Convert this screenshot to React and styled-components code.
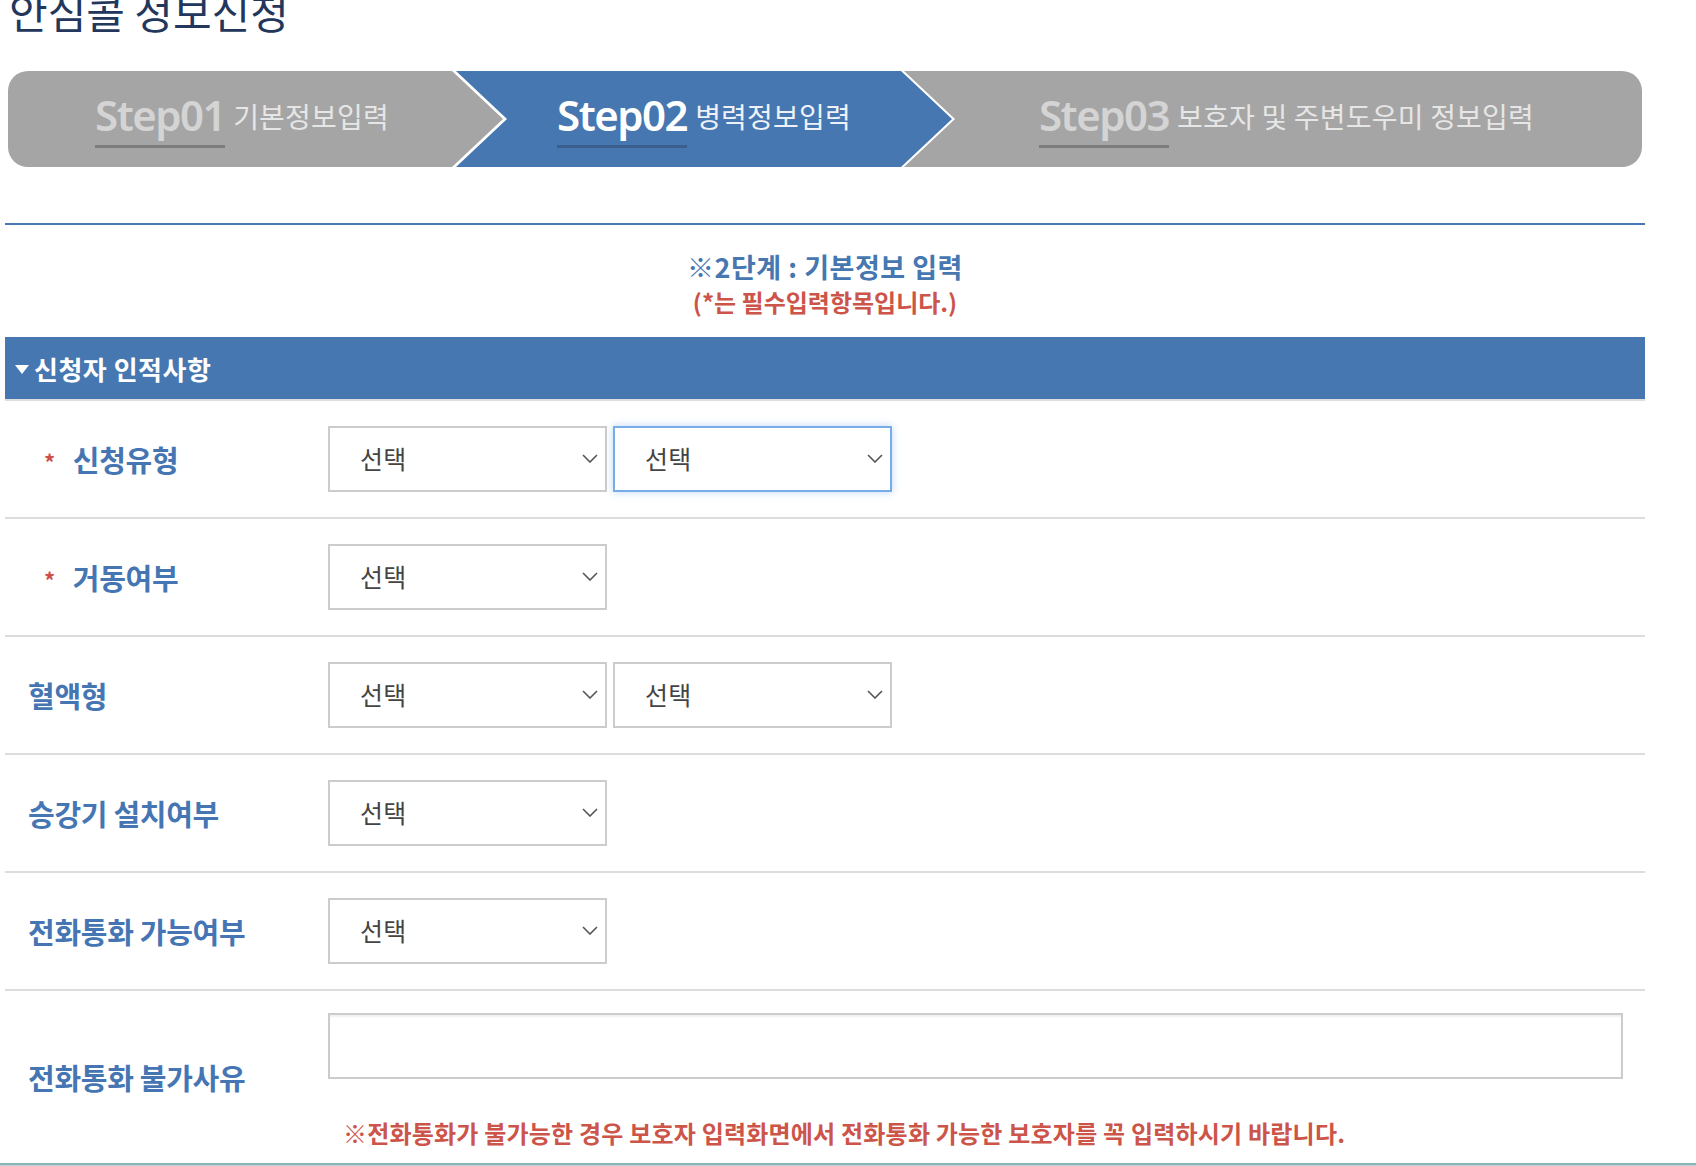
import React from 'react';
import styled, { createGlobalStyle } from 'styled-components';

const GlobalStyle = createGlobalStyle`
  html, body {
    margin: 0;
    padding: 0;
    background: #fff;
  }
  body {
    font-family: "Noto Sans CJK KR", "Noto Sans", sans-serif;
    overflow: hidden;
  }
`

const Page = styled.div`
  width: 1696px;
  min-height: 1166px;
  display: flex;
  flex-direction: column;
`

const Wrap = styled.div`
  width: 1640px;
  margin-left: 5px;
`

const Title = styled.h1`
  margin: -11px 0 0 4px;
  font-size: 42px;
  line-height: 44px;
  font-weight: 400;
  color: #23365c;
`

const StepBar = styled.div`
  display: flex;
  margin: 38px 3px 0 3px;
  height: 96px;
`

const Step = styled.div`
  height: 96px;
  width: ${p => p.$w ? p.$w + 'px' : 'auto'};
  flex: ${p => p.$last ? 1 : 'none'};
  margin-left: ${p => p.$ml || 0}px;
  display: flex;
  align-items: center;
  justify-content: center;
  box-sizing: border-box;
  padding: ${p => p.$pad};
  background: ${p => p.$active ? '#4677b1' : '#a5a5a5'};
  border-radius: ${p => p.$first ? '20px 0 0 20px' : p.$last ? '0 20px 20px 0' : '0'};
  clip-path: ${p => p.$first
    ? 'polygon(0 0, calc(100% - 51px) 0, 100% 50%, calc(100% - 51px) 100%, 0 100%)'
    : p.$last
      ? 'polygon(0 0, 100% 0, 100% 100%, 0 100%, 51px 50%)'
      : 'polygon(0 0, calc(100% - 51px) 0, 100% 50%, calc(100% - 51px) 100%, 0 100%, 51px 50%)'};
`

const StepInner = styled.div`
  display: flex;
  align-items: baseline;
  margin-top: 3px;
`

const StepNum = styled.span`
  font-family: "Noto Sans", "DejaVu Sans", sans-serif;
  font-stretch: condensed;
  font-weight: 600;
  font-size: 42px;
  letter-spacing: -1.5px;
  line-height: 44px;
  padding-bottom: 8px;
  color: ${p => p.$active ? '#ffffff' : '#d4d4d4'};
  border-bottom: 3px solid ${p => p.$active ? '#3a5f8c' : '#7d7d7d'};
`

const StepText = styled.span`
  margin-left: 8px;
  font-size: 28px;
  letter-spacing: 0.2px;
  position: relative;
  top: -3px;
  color: ${p => p.$active ? '#eef2f8' : '#e6e6e6'};
`

const BlueLine = styled.div`
  height: 2px;
  background: #4677b1;
  margin-top: 56px;
`

const Notice = styled.div`
  margin-top: 26px;
  text-align: center;
  font-weight: 700;
`

const NoticeTitle = styled.div`
  font-size: 27px;
  line-height: 32px;
  letter-spacing: 0.5px;
  color: #4677b1;
`

const NoticeSub = styled.div`
  margin-top: 4px;
  font-size: 24px;
  line-height: 30px;
  letter-spacing: 0;
  color: #cc5448;
`

const SectionHead = styled.div`
  margin-top: 20px;
  height: 62px;
  background: #4677b1;
  border-bottom: 2px solid #dedede;
  display: flex;
  align-items: center;
  padding-left: 10px;
  color: #fff;
  font-size: 26px;
  font-weight: 700;
  letter-spacing: 0.5px;
`

const Caret = styled.span`
  width: 0;
  height: 0;
  border-left: 7px solid transparent;
  border-right: 7px solid transparent;
  border-top: 9px solid #fff;
  margin-right: 5px;
  margin-top: 3px;
`

const Row = styled.div`
  display: flex;
  align-items: ${p => p.$tall ? 'stretch' : 'center'};
  min-height: 116px;
  border-bottom: ${p => p.$noLine ? 'none' : '2px solid #dddddd'};
`

const Label = styled.div`
  width: 323px;
  flex: none;
  box-sizing: border-box;
  padding-left: ${p => p.$req ? 39 : 23}px;
  display: flex;
  align-items: center;
  font-size: 29px;
  font-weight: 700;
  letter-spacing: -0.3px;
  color: #4576b3;
`

const Star = styled.span`
  color: #cf4f47;
  font-size: 22px;
  font-weight: 700;
  margin-right: 18px;
  margin-top: 4px;
`

const Field = styled.div`
  display: flex;
  gap: 6px;
  flex-direction: ${p => p.$col ? 'column' : 'row'};
  flex: ${p => p.$col ? 1 : 'none'};
  padding: ${p => p.$col ? '22px 22px 15px 0' : '0'};
`

const SelectWrap = styled.div`
  position: relative;
  width: 279px;
  height: 66px;
  box-sizing: border-box;
  border: 2px solid ${p => p.$focus ? '#78ace8' : '#cccccc'};
  box-shadow: ${p => p.$focus ? '0 0 8px rgba(110,166,232,0.45)' : 'none'};
  background: #fff;
`

const Select = styled.select`
  appearance: none;
  -webkit-appearance: none;
  width: 100%;
  height: 100%;
  border: none;
  outline: none;
  background: transparent;
  padding: 0 40px 2px 30px;
  font-family: "Noto Sans CJK KR", sans-serif;
  font-size: 25px;
  letter-spacing: 0.3px;
  color: #444;
`

const Chevron = styled.svg`
  position: absolute;
  right: 7px;
  top: 26px;
  pointer-events: none;
`

const TextBox = styled.textarea`
  display: block;
  width: 1295px;
  height: 66px;
  box-sizing: border-box;
  border: 2px solid #cccccc;
  box-shadow: inset 0 2px 2px rgba(0,0,0,0.06);
  resize: none;
  outline: none;
`

const Note = styled.div`
  margin-top: 33px;
  padding-left: 15px;
  font-size: 24px;
  line-height: 30px;
  font-weight: 700;
  letter-spacing: 0.2px;
  color: #cc5448;
`

const Footer = styled.div`
  margin-top: auto;
  height: 30px;
  border-top: 2px solid #8fb4b4;
  background: #b9d7d7;
`

const Dropdown = ({ focus }) => (
  <SelectWrap $focus={focus}>
    <Select defaultValue="">
      <option value="">선택</option>
    </Select>
    <Chevron width="16" height="9" viewBox="0 0 16 9">
      <polyline points="1,1 8,8 15,1" fill="none" stroke="#555" strokeWidth="1.6" />
    </Chevron>
  </SelectWrap>
)

const rows = [
  { label: '신청유형', req: true, count: 2, focus: 1 },
  { label: '거동여부', req: true, count: 1 },
  { label: '혈액형', count: 2 },
  { label: '승강기 설치여부', count: 1 },
  { label: '전화통화 가능여부', count: 1 },
]

export default function App() {
  return (
    <Page>
      <GlobalStyle />
      <Wrap>
        <Title>안심콜 정보신청</Title>
        <StepBar>
          <Step $first $w={495} $pad="0 51px 0 24px">
            <StepInner>
              <StepNum>Step01</StepNum>
              <StepText>기본정보입력</StepText>
            </StepInner>
          </Step>
          <Step $active $w={496} $ml={-47} $pad="0 51px">
            <StepInner>
              <StepNum $active>Step02</StepNum>
              <StepText $active>병력정보입력</StepText>
            </StepInner>
          </Step>
          <Step $last $ml={-48} $pad="0 24px 0 51px">
            <StepInner>
              <StepNum>Step03</StepNum>
              <StepText>보호자 및 주변도우미 정보입력</StepText>
            </StepInner>
          </Step>
        </StepBar>

        <BlueLine />

        <Notice>
          <NoticeTitle>※2단계 : 기본정보 입력</NoticeTitle>
          <NoticeSub>(*는 필수입력항목입니다.)</NoticeSub>
        </Notice>

        <SectionHead>
          <Caret />
          신청자 인적사항
        </SectionHead>

        {rows.map((r) => (
          <Row key={r.label}>
            <Label $req={r.req}>
              {r.req && <Star>*</Star>}
              {r.label}
            </Label>
            <Field>
              {Array.from({ length: r.count }).map((_, i) => (
                <Dropdown key={i} focus={r.focus === i} />
              ))}
            </Field>
          </Row>
        ))}

        <Row $tall $noLine>
          <Label>전화통화 불가사유</Label>
          <Field $col>
            <TextBox />
            <Note>※전화통화가 불가능한 경우 보호자 입력화면에서 전화통화 가능한 보호자를 꼭 입력하시기 바랍니다.</Note>
          </Field>
        </Row>
      </Wrap>
      <Footer />
    </Page>
  );
}
